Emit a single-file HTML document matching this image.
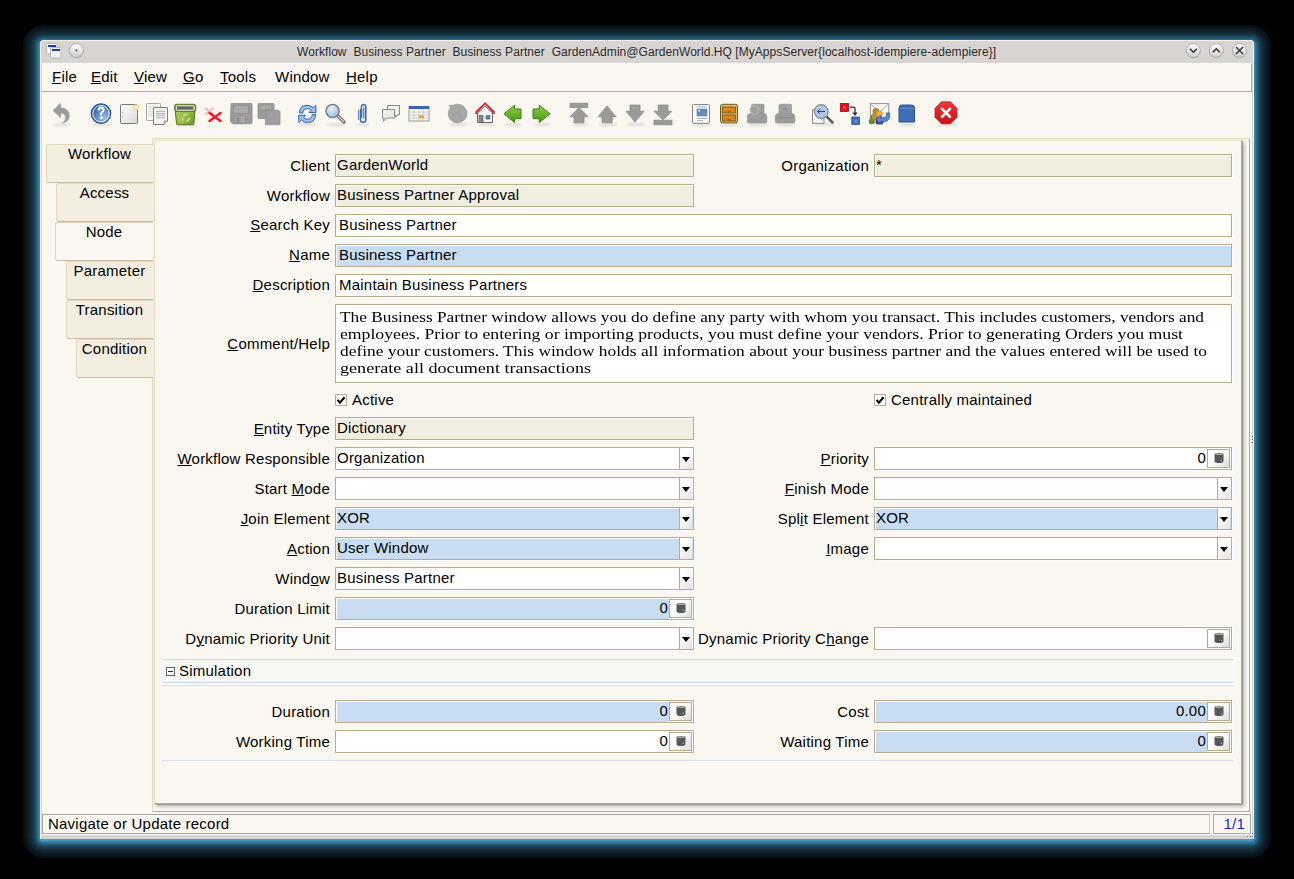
<!DOCTYPE html>
<html><head><meta charset="utf-8"><style>
html,body{margin:0;padding:0;}
body{width:1294px;height:879px;background:#000;position:relative;overflow:hidden;font-family:'Liberation Sans', sans-serif;}
.t{position:absolute;white-space:pre;line-height:0;height:0;letter-spacing:0.22px;}
.serif{letter-spacing:0;}
.t span{display:inline-block;line-height:0;}
.r{text-align:right;}
u{text-decoration:underline;text-underline-offset:1px;text-decoration-thickness:1px;}
.fld{position:absolute;box-sizing:border-box;border:1px solid #b8aa8c;box-shadow:1px 1px 0 #fff;}
.fld::before{content:"";position:absolute;left:0;top:0;right:0;bottom:0;border-left:1px solid #fff;border-top:1px solid #fff;}
</style></head><body>

<div style="position:absolute;left:23px;top:25px;width:1248px;height:833px;border-radius:20px;background:rgb(6, 16, 20);"></div>
<div style="position:absolute;left:24px;top:26px;width:1246px;height:831px;border-radius:19px;background:rgb(7, 18, 23);"></div>
<div style="position:absolute;left:25px;top:27px;width:1244px;height:829px;border-radius:18px;background:rgb(8, 21, 27);"></div>
<div style="position:absolute;left:26px;top:28px;width:1242px;height:827px;border-radius:17px;background:rgb(10, 24, 30);"></div>
<div style="position:absolute;left:27px;top:29px;width:1240px;height:825px;border-radius:16px;background:rgb(11, 27, 35);"></div>
<div style="position:absolute;left:28px;top:30px;width:1238px;height:823px;border-radius:15px;background:rgb(13, 31, 40);"></div>
<div style="position:absolute;left:29px;top:31px;width:1236px;height:821px;border-radius:14px;background:rgb(15, 35, 46);"></div>
<div style="position:absolute;left:30px;top:32px;width:1234px;height:819px;border-radius:13px;background:rgb(17, 40, 52);"></div>
<div style="position:absolute;left:31px;top:33px;width:1232px;height:817px;border-radius:12px;background:rgb(19, 46, 60);"></div>
<div style="position:absolute;left:32px;top:34px;width:1230px;height:815px;border-radius:11px;background:rgb(22, 53, 68);"></div>
<div style="position:absolute;left:33px;top:35px;width:1228px;height:813px;border-radius:10px;background:rgb(26, 61, 78);"></div>
<div style="position:absolute;left:34px;top:36px;width:1226px;height:811px;border-radius:9px;background:rgb(29, 69, 89);"></div>
<div style="position:absolute;left:35px;top:37px;width:1224px;height:809px;border-radius:8px;background:rgb(34, 79, 102);"></div>
<div style="position:absolute;left:36px;top:38px;width:1222px;height:807px;border-radius:7px;background:rgb(38, 91, 117);"></div>
<div style="position:absolute;left:37px;top:39px;width:1220px;height:805px;border-radius:6px;background:rgb(44, 104, 134);"></div>
<div style="position:absolute;left:38px;top:40px;width:1218px;height:803px;border-radius:5px;background:rgb(50, 119, 153);"></div>
<div style="position:absolute;left:39px;top:41px;width:1216px;height:801px;border-radius:4px;background:rgb(58, 136, 175);"></div>
<div style="position:absolute;left:40px;top:42px;width:1214px;height:799px;border-radius:3px;background:rgb(64, 152, 196);"></div>
<div style="position:absolute;left:41px;top:43px;width:1212px;height:797px;border-radius:3px;background:rgb(64, 152, 196);"></div>
<div style="position:absolute;left:40px;top:40px;width:1214px;height:799px;border-radius:4px 4px 3px 3px;background:#d7d4d1;"></div>
<div style="position:absolute;left:40px;top:40px;width:1214px;height:799px;box-sizing:border-box;border:1px solid #f4f0ee;border-bottom:none;border-radius:4px 4px 0 0;"></div>
<div style="position:absolute;left:42px;top:63px;width:1210px;height:772px;background:#faf7f0;"></div>
<div class="t" style="left:297px;top:51.84px;font-size:12px;font-family:'Liberation Sans', sans-serif;color:#2a2a2a;letter-spacing:0.06px;"><span>Workflow  Business Partner  Business Partner  GardenAdmin@GardenWorld.HQ [MyAppsServer{localhost-idempiere-adempiere}]</span></div>
<svg style="position:absolute;left:0;top:0" width="1294" height="140" viewBox="0 0 1294 140"><defs><linearGradient id="gBlue" x1="0" y1="0" x2="1" y2="1"><stop offset="0" stop-color="#2f5fa8"/><stop offset="1" stop-color="#8db3dd"/></linearGradient><radialGradient id="gHelp" cx="0.65" cy="0.7" r="0.7"><stop offset="0" stop-color="#9cc0e6"/><stop offset="1" stop-color="#2b5aa3"/></radialGradient><linearGradient id="gPaper" x1="0" y1="0" x2="1" y2="1"><stop offset="0" stop-color="#ffffff"/><stop offset="1" stop-color="#d8d8d8"/></linearGradient><linearGradient id="gGreen" x1="0" y1="0" x2="1" y2="0.4"><stop offset="0" stop-color="#a9cc55"/><stop offset="0.6" stop-color="#98bf48"/><stop offset="1" stop-color="#7aa232"/></linearGradient><linearGradient id="gArrow" x1="0" y1="0" x2="0" y2="1"><stop offset="0" stop-color="#8fd050"/><stop offset="1" stop-color="#3f9a10"/></linearGradient><linearGradient id="gBtn" x1="0" y1="0" x2="0" y2="1"><stop offset="0" stop-color="#fdfdfd"/><stop offset="1" stop-color="#cfcccb"/></linearGradient><radialGradient id="gLens" cx="0.4" cy="0.35" r="0.7"><stop offset="0" stop-color="#e8f2fc"/><stop offset="1" stop-color="#8fb5e0"/></radialGradient><linearGradient id="gRed" x1="0" y1="0" x2="0" y2="1"><stop offset="0" stop-color="#ee3a3a"/><stop offset="1" stop-color="#c8101a"/></linearGradient><filter id="sh" x="-20%" y="-20%" width="140%" height="160%"><feGaussianBlur stdDeviation="1"/></filter></defs><rect x="46.5" y="43.5" width="10.5" height="10.5" rx="1" fill="#fafafa" stroke="#b9bcb4"/><rect x="48" y="45" width="8" height="2" fill="#1b418c"/><rect x="50.5" y="47.5" width="10.5" height="10.5" rx="1" fill="#f2f2f2" stroke="#b9bcb4"/><rect x="52" y="49" width="8" height="2" fill="#1b418c"/><circle cx="76.4" cy="51.2" r="7.2" fill="#b9b6b3" opacity="0.6"/><circle cx="76.4" cy="50.5" r="7" fill="url(#gBtn)" stroke="#a3a09e" stroke-width="0.8"/><circle cx="76.4" cy="50.4" r="0.9" fill="#333"/><circle cx="1193.4" cy="51.2" r="7.2" fill="#b9b6b3" opacity="0.6"/><circle cx="1193.4" cy="50.5" r="7" fill="url(#gBtn)" stroke="#a3a09e" stroke-width="0.8"/><path d="M1189.9 48.8 L1193.4 52.2 L1196.9 48.8" fill="none" stroke="#303030" stroke-width="1.5"/><circle cx="1216.3" cy="51.2" r="7.2" fill="#b9b6b3" opacity="0.6"/><circle cx="1216.3" cy="50.5" r="7" fill="url(#gBtn)" stroke="#a3a09e" stroke-width="0.8"/><path d="M1212.8 52.2 L1216.3 48.8 L1219.8 52.2" fill="none" stroke="#303030" stroke-width="1.5"/><circle cx="1239.5" cy="51.2" r="7.2" fill="#b9b6b3" opacity="0.6"/><circle cx="1239.5" cy="50.5" r="7" fill="url(#gBtn)" stroke="#a3a09e" stroke-width="0.8"/><path d="M1236.0 47 L1243.0 54 M1243.0 47 L1236.0 54" fill="none" stroke="#303030" stroke-width="1.4"/><ellipse cx="62.0" cy="124.5" rx="9.0" ry="1.6" fill="#000" opacity="0.10" filter="url(#sh)"/><ellipse cx="102.0" cy="124.5" rx="10.0" ry="1.6" fill="#000" opacity="0.10" filter="url(#sh)"/><ellipse cx="186.0" cy="124.5" rx="11.0" ry="1.6" fill="#000" opacity="0.10" filter="url(#sh)"/><ellipse cx="308.5" cy="124.5" rx="9.5" ry="1.6" fill="#000" opacity="0.10" filter="url(#sh)"/><ellipse cx="336.0" cy="124.5" rx="10.0" ry="1.6" fill="#000" opacity="0.10" filter="url(#sh)"/><ellipse cx="363.5" cy="124.5" rx="5.5" ry="1.6" fill="#000" opacity="0.10" filter="url(#sh)"/><ellipse cx="458.5" cy="124.5" rx="9.5" ry="1.6" fill="#000" opacity="0.10" filter="url(#sh)"/><ellipse cx="486.0" cy="124.5" rx="9.0" ry="1.6" fill="#000" opacity="0.10" filter="url(#sh)"/><ellipse cx="513.5" cy="124.5" rx="8.5" ry="1.6" fill="#000" opacity="0.10" filter="url(#sh)"/><ellipse cx="542.5" cy="124.5" rx="8.5" ry="1.6" fill="#000" opacity="0.10" filter="url(#sh)"/><ellipse cx="580.0" cy="124.5" rx="9.0" ry="1.6" fill="#000" opacity="0.10" filter="url(#sh)"/><ellipse cx="608.0" cy="124.5" rx="9.0" ry="1.6" fill="#000" opacity="0.10" filter="url(#sh)"/><ellipse cx="636.0" cy="124.5" rx="9.0" ry="1.6" fill="#000" opacity="0.10" filter="url(#sh)"/><ellipse cx="702.0" cy="124.5" rx="9.0" ry="1.6" fill="#000" opacity="0.10" filter="url(#sh)"/><ellipse cx="730.0" cy="124.5" rx="9.0" ry="1.6" fill="#000" opacity="0.10" filter="url(#sh)"/><ellipse cx="758.0" cy="124.5" rx="10.0" ry="1.6" fill="#000" opacity="0.10" filter="url(#sh)"/><ellipse cx="786.0" cy="124.5" rx="10.0" ry="1.6" fill="#000" opacity="0.10" filter="url(#sh)"/><ellipse cx="823.5" cy="124.5" rx="10.5" ry="1.6" fill="#000" opacity="0.10" filter="url(#sh)"/><ellipse cx="908.0" cy="124.5" rx="8.0" ry="1.6" fill="#000" opacity="0.10" filter="url(#sh)"/><ellipse cx="947.0" cy="124.5" rx="11.0" ry="1.6" fill="#000" opacity="0.10" filter="url(#sh)"/><path d="M53 110.5 L60.5 103.5 L60.5 107.8 Q69.5 108.5 69.3 116.5 Q69 121.5 62.5 123 Q66 120.5 65.5 116.5 Q65 113 60.5 113 L60.5 117.5 Z" fill="#9c9c9c" stroke="#8e8e8e" stroke-width="0.6"/><circle cx="101" cy="113.6" r="9.8" fill="url(#gHelp)" stroke="#234f94" stroke-width="1.1"/><circle cx="101" cy="113.6" r="8.2" fill="none" stroke="#ffffff" stroke-width="0.9"/><path d="M97.6 110.3 Q97.8 106.6 101.3 106.6 Q104.8 106.8 104.7 109.8 Q104.6 111.8 102.6 112.8 Q101.6 113.4 101.6 115.3 L100 115.3 Q99.9 112.6 101.4 111.6 Q102.4 110.9 102.3 109.9 Q102.2 108.7 101.2 108.7 Q100 108.8 99.9 110.5 Z" fill="#fff"/><rect x="99.9" y="116.6" width="2.6" height="2.5" fill="#fff"/><rect x="120.5" y="104.5" width="17" height="19" rx="1" fill="url(#gPaper)" stroke="#7a7a7a"/><circle cx="122.5" cy="112.2" r="0.5" fill="#888"/><circle cx="122.5" cy="116.5" r="0.5" fill="#888"/><circle cx="136" cy="107.2" r="2.3" fill="#fffbe0" stroke="#f0e050" stroke-width="1.2"/><rect x="146.5" y="103.5" width="14" height="17" rx="0.8" fill="#f6f6f6" stroke="#a9a9a9"/><line x1="148.5" y1="107" x2="158" y2="107" stroke="#d0d0d0" stroke-width="0.7"/><line x1="148.5" y1="109.2" x2="158" y2="109.2" stroke="#d0d0d0" stroke-width="0.7"/><line x1="148.5" y1="111.4" x2="158" y2="111.4" stroke="#d0d0d0" stroke-width="0.7"/><line x1="148.5" y1="113.6" x2="158" y2="113.6" stroke="#d0d0d0" stroke-width="0.7"/><line x1="148.5" y1="115.8" x2="158" y2="115.8" stroke="#d0d0d0" stroke-width="0.7"/><path d="M153.5 107.5 L167.5 107.5 L167.5 121 L164 124.5 L153.5 124.5 Z" fill="#f3f3f3" stroke="#808080"/><path d="M167.5 121 L164 121 L164 124.5" fill="#d0d0d0" stroke="#808080" stroke-width="0.8"/><line x1="156" y1="111.3" x2="165" y2="111.3" stroke="#9a9a9a" stroke-width="0.8"/><line x1="156" y1="113.5" x2="165" y2="113.5" stroke="#9a9a9a" stroke-width="0.8"/><line x1="156" y1="115.7" x2="165" y2="115.7" stroke="#9a9a9a" stroke-width="0.8"/><line x1="156" y1="117.9" x2="165" y2="117.9" stroke="#9a9a9a" stroke-width="0.8"/><path d="M175.3 111 L195 111 L193.8 124 Q193.6 124.7 192.9 124.7 L177.4 124.7 Q176.7 124.7 176.6 124 Z" fill="url(#gGreen)" stroke="#56761a" stroke-width="1"/><path d="M174.6 106.3 Q174.6 104.3 176.6 104.3 L193.8 104.3 Q195.8 104.3 195.8 106.3 L195.8 109.3 Q195.8 111.2 193.8 111.2 L176.6 111.2 Q174.6 111.2 174.6 109.3 Z" fill="#7ea232" stroke="#56761a" stroke-width="1"/><rect x="176.4" y="105.8" width="17.6" height="4.4" rx="0.8" fill="#606260" stroke="#f4f4f4" stroke-width="1"/><path d="M183.5 116 Q185 113.7 187.6 114.5 M189.2 117.8 Q189.3 120.6 186.6 121 M183.3 120.3 Q182 118.8 182.7 117.3" fill="none" stroke="#e2f0c0" stroke-width="1.1"/><path d="M205 108 L213.5 114.5 M213.5 108 L205 114.5" stroke="#ffb0b8" stroke-width="1.8"/><path d="M209.5 113 L220.5 121 M220.5 113 L209.5 121" stroke="#ff1224" stroke-width="2.4" stroke-linecap="round"/><path d="M231 104.5 Q230.5 103.5 231.5 103.5 L251 103.5 Q252 103.5 252 104.5 L252 123 Q252 123.8 251 123.8 L232.5 123.8 L230.5 121.8 Z" fill="#9b9b9b" stroke="#8d8d8d" stroke-width="0.8"/><rect x="233.5" y="105.5" width="15" height="8" fill="#a9a9a9" stroke="#8f8f8f" stroke-width="0.7"/><rect x="235" y="115.5" width="10.5" height="8" fill="#a5a5a5" stroke="#8f8f8f" stroke-width="0.7"/><rect x="237" y="117" width="2.2" height="5.5" fill="#8a8a8a"/><rect x="258" y="103.5" width="16" height="15" rx="0.8" fill="#9b9b9b" stroke="#8d8d8d" stroke-width="0.8"/><rect x="260" y="105" width="12" height="5" fill="#a9a9a9" stroke="#8f8f8f" stroke-width="0.6"/><path d="M265.5 110.2 L278.5 110.2 L280 111.8 L280 124.7 L265.5 124.7 Z" fill="#9e9e9e" stroke="#8d8d8d" stroke-width="0.8"/><path d="M299.5 113 Q299.5 105.3 307.3 105.3 Q311.3 105.3 313.3 108 L315.8 105.5 L316 112.5 L309 112.5 L311.2 110.3 Q309.8 108.6 307.3 108.6 Q303 108.8 302.8 113 Z" fill="#9fc0e8" stroke="#3366b0" stroke-width="1"/><path d="M315.5 114.5 Q315.5 122.6 307.5 122.6 Q303.5 122.6 301.5 119.8 L299 122.5 L298.5 115.3 L305.8 115.3 L303.6 117.6 Q305 119.3 307.5 119.3 Q312 119.1 312.2 114.5 Z" fill="#9fc0e8" stroke="#3366b0" stroke-width="1"/><path d="M337.5 115.5 L344 122" stroke="#6a6a6a" stroke-width="3.2" stroke-linecap="round"/><path d="M337.8 115.8 L343.7 121.7" stroke="#e8e8e8" stroke-width="1.2" stroke-linecap="round"/><circle cx="332.6" cy="111" r="6.6" fill="url(#gLens)" stroke="#7b7b7b" stroke-width="1.4"/><path d="M360.5 109 L360.5 119.5 Q360.5 122.3 363 122.3 Q365.8 122.3 365.8 119.5 L365.8 106.8 Q365.8 104.5 363.6 104.5 Q361.5 104.5 361.5 106.8 L361.5 118" fill="none" stroke="#3f6fb4" stroke-width="1.6"/><path d="M363.8 107.5 L363.8 118.5" fill="none" stroke="#3f6fb4" stroke-width="1.2"/><path d="M358.5 110 L358.5 120" stroke="#6a90c8" stroke-width="1.2"/><path d="M387.5 105.5 L399.5 105.5 L399.5 114.5 L397.5 114.5 L396 117 L395 114.5 L387.5 114.5 Z" fill="#f2f2f2" stroke="#7d7d7d" stroke-width="0.9"/><path d="M382.5 109.5 L394.5 109.5 L394.5 118 L386.5 118 L383.5 121.3 L384 118 L382.5 118 Z" fill="#ececec" stroke="#7d7d7d" stroke-width="0.9"/><rect x="409" y="106.5" width="20" height="14.5" fill="#f6f6f2" stroke="#8e8e8e" stroke-width="0.9"/><rect x="409" y="106" width="20" height="3" fill="#3a66b0"/><line x1="409.5" y1="112" x2="428.5" y2="112" stroke="#c8c8c8" stroke-width="0.8"/><line x1="409.5" y1="115" x2="428.5" y2="115" stroke="#c8c8c8" stroke-width="0.8"/><line x1="409.5" y1="118" x2="428.5" y2="118" stroke="#c8c8c8" stroke-width="0.8"/><line x1="413.8" y1="109" x2="413.8" y2="120.5" stroke="#c8c8c8" stroke-width="0.8"/><line x1="418.6" y1="109" x2="418.6" y2="120.5" stroke="#c8c8c8" stroke-width="0.8"/><line x1="423.4" y1="109" x2="423.4" y2="120.5" stroke="#c8c8c8" stroke-width="0.8"/><rect x="419" y="115.5" width="4.8" height="2.8" rx="1" fill="#f09a20"/><circle cx="457.6" cy="113.5" r="9.3" fill="#a6a6a6" stroke="#9a9a9a" stroke-width="0.8"/><path d="M453 116.5 L457.3 112.3 L461.6 116.5" fill="none" stroke="#959595" stroke-width="0.8"/><path d="M448 105.5 L452.5 104.8 L451.5 108.5 Z" fill="#a0a0a0"/><path d="M477.5 113 L477.5 122.5 L492.5 122.5 L492.5 113 L485 106 Z" fill="#f4f4f4" stroke="#555" stroke-width="0.9"/><path d="M475.8 114 L485.1 104 L494.3 114 L494.3 111.5 L485.1 102.6 L475.8 111.5 Z" fill="#e8242c" stroke="#c01018" stroke-width="0.7"/><rect x="479" y="115.5" width="4" height="7" fill="#8a8a84" stroke="#555" stroke-width="0.6"/><rect x="486" y="115.5" width="4" height="3.6" fill="#5080c0" stroke="#555" stroke-width="0.5"/><path d="M504 113.8 L514.5 105.3 L514.5 109 L521 109 L521 118.7 L514.5 118.7 L514.5 122.5 Z" fill="url(#gArrow)" stroke="#3a8010" stroke-width="1"/><path d="M550 113.8 L539.3 105.3 L539.3 109 L533 109 L533 118.7 L539.3 118.7 L539.3 122.5 Z" fill="url(#gArrow)" stroke="#3a8010" stroke-width="1"/><rect x="570" y="103.2" width="17.8" height="4.4" fill="#9a9a9a" stroke="#8c8c8c" stroke-width="0.8"/><path d="M579 107.6 L570 116.8 L574 116.8 L574 122.8 L584 122.8 L584 116.8 L588 116.8 Z" fill="#9a9a9a" stroke="#8c8c8c" stroke-width="0.8"/><path d="M607 106 L598 116.8 L602 116.8 L602 122.8 L612.2 122.8 L612.2 116.8 L616 116.8 Z" fill="#9a9a9a" stroke="#8c8c8c" stroke-width="0.8"/><path d="M630 105 L640 105 L640 111.3 L644 111.3 L635 122 L626 111.3 L630 111.3 Z" fill="#9a9a9a" stroke="#8c8c8c" stroke-width="0.8"/><path d="M658.2 105 L668 105 L668 111.3 L672 111.3 L663 119.8 L654 111.3 L658.2 111.3 Z" fill="#9a9a9a" stroke="#8c8c8c" stroke-width="0.8"/><rect x="654" y="120.2" width="18" height="4.6" fill="#9a9a9a" stroke="#8c8c8c" stroke-width="0.8"/><rect x="692.5" y="104.5" width="17" height="18.8" rx="1" fill="#fbfbfb" stroke="#777" stroke-width="0.9"/><rect x="697" y="109" width="10" height="7" fill="#5a90d0" stroke="#3c70b8" stroke-width="0.5"/><circle cx="699.3" cy="110.8" r="1" fill="#f8f0a0"/><path d="M697 116 L701 112.8 L704 114.5 L707 112 L707 116 Z" fill="#7a8aa0"/><line x1="697" y1="106.8" x2="707" y2="106.8" stroke="#9a9a9a" stroke-width="0.8"/><line x1="697" y1="118.5" x2="707" y2="118.5" stroke="#9a9a9a" stroke-width="0.8"/><line x1="697" y1="120.8" x2="703" y2="120.8" stroke="#9a9a9a" stroke-width="0.8"/><rect x="720.5" y="104.3" width="17" height="18.5" rx="2" fill="#e6b870" stroke="#6a5a1a" stroke-width="1"/><rect x="722.5" y="107" width="13" height="6" fill="#d8861a" stroke="#6a5a1a" stroke-width="0.8"/><rect x="722.5" y="115" width="13" height="6" fill="#d8861a" stroke="#6a5a1a" stroke-width="0.8"/><rect x="727.5" y="111.3" width="3" height="1.2" fill="#6a5a1a"/><rect x="727.5" y="119.3" width="3" height="1.2" fill="#6a5a1a"/><rect x="751.5" y="104.3" width="12.5" height="10" rx="0.8" fill="#a0a0a0" stroke="#949494" stroke-width="0.7"/><path d="M747.3 117 Q747.3 113.5 750.5 113.5 L763.5 113.5 Q766.8 113.5 766.8 117 L766.8 121.5 Q766.8 122.9 765.5 122.9 L748.6 122.9 Q747.3 122.9 747.3 121.5 Z" fill="#9c9c9c" stroke="#929292" stroke-width="0.7"/><circle cx="754.5" cy="110" r="4.2" fill="none" stroke="#b0b0b0" stroke-width="1.2"/><rect x="779" y="104.3" width="12.5" height="10" rx="0.8" fill="#a0a0a0" stroke="#949494" stroke-width="0.7"/><path d="M775.3 117 Q775.3 113.5 778.5 113.5 L791.5 113.5 Q794.8 113.5 794.8 117 L794.8 121.5 Q794.8 122.9 793.5 122.9 L776.6 122.9 Q775.3 122.9 775.3 121.5 Z" fill="#9c9c9c" stroke="#929292" stroke-width="0.7"/><path d="M783 110 L785.3 107 L787.6 110 Z" fill="#8a8a8a"/><line x1="776" y1="117.5" x2="794" y2="117.5" stroke="#8a8a8a" stroke-width="0.7"/><rect x="812.5" y="109.8" width="11.5" height="13.5" fill="#f4f4f4" stroke="#808080" stroke-width="0.9"/><path d="M826.5 116.5 L832.5 122.5" stroke="#5e5e5e" stroke-width="2.6" stroke-linecap="round"/><circle cx="821.2" cy="111.5" r="6.8" fill="#a8c4e4" fill-opacity="0.9" stroke="#8a8a8a" stroke-width="1.2"/><path d="M817.5 111.5 L825 111.5 M817.5 111.5 L819.8 109.3 M817.5 111.5 L819.8 113.7" stroke="#2a4a80" stroke-width="1"/><rect x="840.5" y="103.5" width="8" height="8" fill="#e01018" stroke="#a00810" stroke-width="0.8"/><rect x="843" y="106" width="3" height="3" fill="#ff4040"/><path d="M849.5 107.2 L853.6 107.2 Q855 107.2 855 108.8 L855 113.5" fill="none" stroke="#303030" stroke-width="1.3"/><path d="M852.4 112.5 L855 116 L857.6 112.5 Z" fill="#303030"/><rect x="851.8" y="117" width="7.8" height="7.5" fill="#3f70b8" stroke="#2a5090" stroke-width="0.8"/><rect x="854.5" y="119.8" width="2.5" height="2.5" fill="#6a98d8"/><rect x="870.3" y="103.7" width="18.5" height="13.5" fill="#fafafa" stroke="#7a7a7a" stroke-width="0.8"/><path d="M870.5 104 L879.5 112 L888.6 104" fill="none" stroke="#9a9a9a" stroke-width="0.8"/><circle cx="873" cy="117.5" r="2.8" fill="#6a8a30"/><rect x="868.8" y="119" width="6" height="5" rx="1.5" fill="#6a8a30"/><circle cx="876" cy="111.5" r="3.2" fill="#b88a30" stroke="#8a6a20" stroke-width="0.5"/><rect x="872" y="113.5" width="7" height="6" rx="2" fill="#b8903a"/><circle cx="879.5" cy="114" r="3.2" fill="#f0b040" stroke="#c88820" stroke-width="0.5"/><rect x="875.5" y="117.5" width="8" height="7" rx="2" fill="#5a3a8a"/><path d="M889.5 115.5 Q889.5 121.5 884 121.5 L880.5 121.5 L880.5 124 L876.5 119.5 L880.5 115 L880.5 118 L884 118 Q886.3 118 886.3 115.5 L886.3 113 L889.5 113 Z" fill="#5a8ad0" stroke="#2a5aa0" stroke-width="0.8"/><path d="M899 108 Q899 105 902 105 L911.5 105 Q914.5 105 914.5 108 L914.5 122 L899 122 Z" fill="#3e6fb6" stroke="#2b528e" stroke-width="1"/><line x1="900" y1="108.3" x2="913.5" y2="108.3" stroke="#6a94d0" stroke-width="0.8"/><path d="M941.5 101.8 L950.5 101.8 L957 108.3 L957 117.3 L950.5 123.8 L941.5 123.8 L935 117.3 L935 108.3 Z" fill="url(#gRed)" stroke="#b01018" stroke-width="0.7"/><path d="M942 108.8 L950 116.8 M950 108.8 L942 116.8" stroke="#fff" stroke-width="2.6" stroke-linecap="round"/></svg>
<div style="position:absolute;left:42px;top:63px;width:1210px;height:29px;box-sizing:border-box;border-top:1px solid #fff;border-bottom:1px solid #b8aa8c;border-right:1px solid #b8aa8c;"></div>
<div class="t" style="left:52px;top:76.80px;font-size:15px;font-family:'Liberation Sans', sans-serif;color:#000;"><span><u>F</u>ile</span></div>
<div class="t" style="left:91px;top:76.80px;font-size:15px;font-family:'Liberation Sans', sans-serif;color:#000;"><span><u>E</u>dit</span></div>
<div class="t" style="left:134px;top:76.80px;font-size:15px;font-family:'Liberation Sans', sans-serif;color:#000;"><span><u>V</u>iew</span></div>
<div class="t" style="left:183px;top:76.80px;font-size:15px;font-family:'Liberation Sans', sans-serif;color:#000;"><span><u>G</u>o</span></div>
<div class="t" style="left:220px;top:76.80px;font-size:15px;font-family:'Liberation Sans', sans-serif;color:#000;"><span><u>T</u>ools</span></div>
<div class="t" style="left:275px;top:76.80px;font-size:15px;font-family:'Liberation Sans', sans-serif;color:#000;"><span>Window</span></div>
<div class="t" style="left:346px;top:76.80px;font-size:15px;font-family:'Liberation Sans', sans-serif;color:#000;"><span><u>H</u>elp</span></div>
<div style="position:absolute;left:152px;top:138px;width:1098px;height:674px;box-sizing:border-box;border:1px solid #e6dcc4;border-bottom-color:#b8aa8c;border-right-color:#b8aa8c;"></div>
<div style="position:absolute;left:154px;top:140px;width:1088px;height:664px;box-sizing:border-box;border:1px solid #e6dcc4;border-bottom-color:#b8aa8c;border-right-color:#b8aa8c;box-shadow:1px 1px 0 rgba(0,0,0,0.18),2px 2px 4px rgba(0,0,0,0.32);background:#faf7f0;"></div>
<div style="position:absolute;left:46px;top:144px;width:107px;height:39px;box-sizing:border-box;background:#f3eee0;border:1px solid #e2d6bc;border-right:none;border-bottom-color:#cbbd9c;border-radius:3px 0 0 3px;"></div>
<div class="t" style="left:46px;width:107px;text-align:center;top:153.80px;font-size:15px;"><span>Workflow</span></div>
<div style="position:absolute;left:56px;top:183px;width:97px;height:39px;box-sizing:border-box;background:#f3eee0;border:1px solid #e2d6bc;border-right:none;border-bottom-color:#cbbd9c;border-radius:3px 0 0 3px;"></div>
<div class="t" style="left:56px;width:97px;text-align:center;top:192.80px;font-size:15px;"><span>Access</span></div>
<div style="position:absolute;left:55px;top:222px;width:98px;height:39px;box-sizing:border-box;background:#faf7f0;border:1px solid #e2d6bc;border-right:none;border-bottom-color:#cbbd9c;border-radius:3px 0 0 3px;"></div>
<div class="t" style="left:55px;width:98px;text-align:center;top:231.80px;font-size:15px;"><span>Node</span></div>
<div style="position:absolute;left:66px;top:261px;width:87px;height:39px;box-sizing:border-box;background:#f3eee0;border:1px solid #e2d6bc;border-right:none;border-bottom-color:#cbbd9c;border-radius:3px 0 0 3px;"></div>
<div class="t" style="left:66px;width:87px;text-align:center;top:270.80px;font-size:15px;"><span>Parameter</span></div>
<div style="position:absolute;left:66px;top:300px;width:87px;height:39px;box-sizing:border-box;background:#f3eee0;border:1px solid #e2d6bc;border-right:none;border-bottom-color:#cbbd9c;border-radius:3px 0 0 3px;"></div>
<div class="t" style="left:66px;width:87px;text-align:center;top:309.80px;font-size:15px;"><span>Transition</span></div>
<div style="position:absolute;left:76px;top:339px;width:77px;height:39px;box-sizing:border-box;background:#f3eee0;border:1px solid #e2d6bc;border-right:none;border-bottom-color:#cbbd9c;border-radius:3px 0 0 3px;"></div>
<div class="t" style="left:76px;width:77px;text-align:center;top:348.80px;font-size:15px;"><span>Condition</span></div>
<div class="t r" style="right:964px;top:165.80px;font-size:15px;"><span>Client</span></div>
<div class="fld" style="left:335px;top:154px;width:359px;height:23px;background:#f0eedf;"></div>
<div class="t" style="left:337px;top:164.80px;font-size:15px;font-family:'Liberation Sans', sans-serif;color:#000;"><span>GardenWorld</span></div>
<div class="t r" style="right:425px;top:165.80px;font-size:15px;"><span>Organization</span></div>
<div class="fld" style="left:874px;top:154px;width:358px;height:23px;background:#f0eedf;"></div>
<div class="t" style="left:876px;top:164.80px;font-size:15px;font-family:'Liberation Sans', sans-serif;color:#000;"><span>*</span></div>
<div class="t r" style="right:964px;top:195.80px;font-size:15px;"><span>Workflow</span></div>
<div class="fld" style="left:335px;top:184px;width:359px;height:23px;background:#f0eedf;"></div>
<div class="t" style="left:337px;top:194.80px;font-size:15px;font-family:'Liberation Sans', sans-serif;color:#000;"><span>Business Partner Approval</span></div>
<div class="t r" style="right:964px;top:224.80px;font-size:15px;"><span><u>S</u>earch Key</span></div>
<div class="fld" style="left:335px;top:214px;width:897px;height:23px;background:#fff;"></div>
<div class="t" style="left:339px;top:224.80px;font-size:15px;font-family:'Liberation Sans', sans-serif;color:#000;"><span>Business Partner</span></div>
<div class="t r" style="right:964px;top:254.80px;font-size:15px;"><span><u>N</u>ame</span></div>
<div class="fld" style="left:335px;top:244px;width:897px;height:23px;background:#c8ddf2;"></div>
<div class="t" style="left:339px;top:254.80px;font-size:15px;font-family:'Liberation Sans', sans-serif;color:#000;"><span>Business Partner</span></div>
<div class="t r" style="right:964px;top:284.80px;font-size:15px;"><span><u>D</u>escription</span></div>
<div class="fld" style="left:335px;top:274px;width:897px;height:23px;background:#fff;"></div>
<div class="t" style="left:339px;top:284.80px;font-size:15px;font-family:'Liberation Sans', sans-serif;color:#000;"><span>Maintain Business Partners</span></div>
<div class="t r" style="right:964px;top:343.80px;font-size:15px;"><span><u>C</u>omment/Help</span></div>
<div class="fld" style="left:335px;top:304px;width:897px;height:79px;background:#fff;"></div>
<div class="t serif" data-w="863" style="left:340px;top:316.80px;font-size:15px;font-family:'Liberation Serif', serif;transform:scaleX(1.1526);transform-origin:0 0;"><span>The Business Partner window allows you do define any party with whom you transact. This includes customers, vendors and</span></div>
<div class="t serif" data-w="842" style="left:340px;top:333.80px;font-size:15px;font-family:'Liberation Serif', serif;transform:scaleX(1.1792);transform-origin:0 0;"><span>employees. Prior to entering or importing products, you must define your vendors. Prior to generating Orders you must</span></div>
<div class="t serif" data-w="866" style="left:340px;top:350.80px;font-size:15px;font-family:'Liberation Serif', serif;transform:scaleX(1.1605);transform-origin:0 0;"><span>define your customers. This window holds all information about your business partner and the values entered will be used to</span></div>
<div class="t serif" data-w="250" style="left:340px;top:367.80px;font-size:15px;font-family:'Liberation Serif', serif;transform:scaleX(1.2077);transform-origin:0 0;"><span>generate all document transactions</span></div>
<div style="position:absolute;left:335px;top:394px;width:12px;height:12px;box-sizing:border-box;border:1px solid #b8aa8c;background:#fff;"></div>
<svg style="position:absolute;left:335px;top:394px" width="12" height="12" viewBox="0 0 12 12"><path d="M2.6 5.8 L4.9 8.6 L9.6 3.2" fill="none" stroke="#000" stroke-width="2.1"/></svg>
<div class="t" style="left:352px;top:399.80px;font-size:15px;font-family:'Liberation Sans', sans-serif;color:#000;"><span>Active</span></div>
<div style="position:absolute;left:874px;top:394px;width:12px;height:12px;box-sizing:border-box;border:1px solid #b8aa8c;background:#fff;"></div>
<svg style="position:absolute;left:874px;top:394px" width="12" height="12" viewBox="0 0 12 12"><path d="M2.6 5.8 L4.9 8.6 L9.6 3.2" fill="none" stroke="#000" stroke-width="2.1"/></svg>
<div class="t" style="left:891px;top:399.80px;font-size:15px;font-family:'Liberation Sans', sans-serif;color:#000;"><span>Centrally maintained</span></div>
<div class="t r" style="right:964px;top:428.80px;font-size:15px;"><span><u>E</u>ntity Type</span></div>
<div class="fld" style="left:335px;top:417px;width:359px;height:23px;background:#f0eedf;"></div>
<div class="t" style="left:337px;top:427.80px;font-size:15px;font-family:'Liberation Sans', sans-serif;color:#000;"><span>Dictionary</span></div>
<div class="t r" style="right:964px;top:458.80px;font-size:15px;"><span><u>W</u>orkflow Responsible</span></div>
<div class="fld" style="left:335px;top:447px;width:359px;height:23px;background:#fff;"></div>
<div style="position:absolute;left:679px;top:448px;width:13px;height:21px;box-sizing:border-box;border-left:1px solid #b8aa8c;background:linear-gradient(135deg,#ffffff 30%,#e4e2de 100%);"></div>
<div style="position:absolute;left:682px;top:457px;width:0;height:0;border-left:4px solid transparent;border-right:4px solid transparent;border-top:5px solid #000;"></div>
<div class="t" style="left:337px;top:457.80px;font-size:15px;font-family:'Liberation Sans', sans-serif;color:#000;"><span>Organization</span></div>
<div class="t r" style="right:425px;top:458.80px;font-size:15px;"><span><u>P</u>riority</span></div>
<div class="fld" style="left:874px;top:447px;width:358px;height:23px;background:#fff;"></div>
<div style="position:absolute;left:1207px;top:448px;width:24px;height:21px;background:#fff"></div>
<div style="position:absolute;left:1207px;top:449px;width:23px;height:19px;box-sizing:border-box;border:1px solid #b8aa8c;background:linear-gradient(135deg,#ffffff 40%,#dedcd6 100%);"></div>
<svg style="position:absolute;left:1213px;top:452px" width="12" height="12" viewBox="0 0 12 12"><path d="M1.5 2.5 Q1.5 1 6 1 Q10.5 1 10.5 2.5 L10.5 9 Q10.5 11 6 11 Q1.5 11 1.5 9 Z" fill="#55585a"/><rect x="2.5" y="1.6" width="7" height="1.4" rx="0.7" fill="#a9ae88"/><circle cx="8.3" cy="8.3" r="0.6" fill="#ccc"/></svg>
<div class="t r" style="right:88px;top:457.80px;font-size:15px;"><span>0</span></div>
<div class="t r" style="right:964px;top:488.80px;font-size:15px;"><span>Start <u>M</u>ode</span></div>
<div class="fld" style="left:335px;top:477px;width:359px;height:23px;background:#fff;"></div>
<div style="position:absolute;left:679px;top:478px;width:13px;height:21px;box-sizing:border-box;border-left:1px solid #b8aa8c;background:linear-gradient(135deg,#ffffff 30%,#e4e2de 100%);"></div>
<div style="position:absolute;left:682px;top:487px;width:0;height:0;border-left:4px solid transparent;border-right:4px solid transparent;border-top:5px solid #000;"></div>
<div class="t r" style="right:425px;top:488.80px;font-size:15px;"><span><u>F</u>inish Mode</span></div>
<div class="fld" style="left:874px;top:477px;width:358px;height:23px;background:#fff;"></div>
<div style="position:absolute;left:1217px;top:478px;width:13px;height:21px;box-sizing:border-box;border-left:1px solid #b8aa8c;background:linear-gradient(135deg,#ffffff 30%,#e4e2de 100%);"></div>
<div style="position:absolute;left:1220px;top:487px;width:0;height:0;border-left:4px solid transparent;border-right:4px solid transparent;border-top:5px solid #000;"></div>
<div class="t r" style="right:964px;top:518.80px;font-size:15px;"><span><u>J</u>oin Element</span></div>
<div class="fld" style="left:335px;top:507px;width:359px;height:23px;background:#c8ddf2;"></div>
<div style="position:absolute;left:679px;top:508px;width:13px;height:21px;box-sizing:border-box;border-left:1px solid #b8aa8c;background:linear-gradient(135deg,#ffffff 30%,#e4e2de 100%);"></div>
<div style="position:absolute;left:682px;top:517px;width:0;height:0;border-left:4px solid transparent;border-right:4px solid transparent;border-top:5px solid #000;"></div>
<div class="t" style="left:337px;top:517.80px;font-size:15px;font-family:'Liberation Sans', sans-serif;color:#000;"><span>XOR</span></div>
<div class="t r" style="right:425px;top:518.80px;font-size:15px;"><span>Spl<u>i</u>t Element</span></div>
<div class="fld" style="left:874px;top:507px;width:358px;height:23px;background:#c8ddf2;"></div>
<div style="position:absolute;left:1217px;top:508px;width:13px;height:21px;box-sizing:border-box;border-left:1px solid #b8aa8c;background:linear-gradient(135deg,#ffffff 30%,#e4e2de 100%);"></div>
<div style="position:absolute;left:1220px;top:517px;width:0;height:0;border-left:4px solid transparent;border-right:4px solid transparent;border-top:5px solid #000;"></div>
<div class="t" style="left:876px;top:517.80px;font-size:15px;font-family:'Liberation Sans', sans-serif;color:#000;"><span>XOR</span></div>
<div class="t r" style="right:964px;top:548.80px;font-size:15px;"><span><u>A</u>ction</span></div>
<div class="fld" style="left:335px;top:537px;width:359px;height:23px;background:#c8ddf2;"></div>
<div style="position:absolute;left:679px;top:538px;width:13px;height:21px;box-sizing:border-box;border-left:1px solid #b8aa8c;background:linear-gradient(135deg,#ffffff 30%,#e4e2de 100%);"></div>
<div style="position:absolute;left:682px;top:547px;width:0;height:0;border-left:4px solid transparent;border-right:4px solid transparent;border-top:5px solid #000;"></div>
<div class="t" style="left:337px;top:547.80px;font-size:15px;font-family:'Liberation Sans', sans-serif;color:#000;"><span>User Window</span></div>
<div class="t r" style="right:425px;top:548.80px;font-size:15px;"><span><u>I</u>mage</span></div>
<div class="fld" style="left:874px;top:537px;width:358px;height:23px;background:#fff;"></div>
<div style="position:absolute;left:1217px;top:538px;width:13px;height:21px;box-sizing:border-box;border-left:1px solid #b8aa8c;background:linear-gradient(135deg,#ffffff 30%,#e4e2de 100%);"></div>
<div style="position:absolute;left:1220px;top:547px;width:0;height:0;border-left:4px solid transparent;border-right:4px solid transparent;border-top:5px solid #000;"></div>
<div class="t r" style="right:964px;top:578.80px;font-size:15px;"><span>Wind<u>o</u>w</span></div>
<div class="fld" style="left:335px;top:567px;width:359px;height:23px;background:#fff;"></div>
<div style="position:absolute;left:679px;top:568px;width:13px;height:21px;box-sizing:border-box;border-left:1px solid #b8aa8c;background:linear-gradient(135deg,#ffffff 30%,#e4e2de 100%);"></div>
<div style="position:absolute;left:682px;top:577px;width:0;height:0;border-left:4px solid transparent;border-right:4px solid transparent;border-top:5px solid #000;"></div>
<div class="t" style="left:337px;top:577.80px;font-size:15px;font-family:'Liberation Sans', sans-serif;color:#000;"><span>Business Partner</span></div>
<div class="t r" style="right:964px;top:608.80px;font-size:15px;"><span>Duration Limit</span></div>
<div class="fld" style="left:335px;top:597px;width:359px;height:23px;background:#c8ddf2;"></div>
<div style="position:absolute;left:669px;top:598px;width:24px;height:21px;background:#fff"></div>
<div style="position:absolute;left:669px;top:599px;width:23px;height:19px;box-sizing:border-box;border:1px solid #b8aa8c;background:linear-gradient(135deg,#ffffff 40%,#dedcd6 100%);"></div>
<svg style="position:absolute;left:675px;top:602px" width="12" height="12" viewBox="0 0 12 12"><path d="M1.5 2.5 Q1.5 1 6 1 Q10.5 1 10.5 2.5 L10.5 9 Q10.5 11 6 11 Q1.5 11 1.5 9 Z" fill="#55585a"/><rect x="2.5" y="1.6" width="7" height="1.4" rx="0.7" fill="#a9ae88"/><circle cx="8.3" cy="8.3" r="0.6" fill="#ccc"/></svg>
<div class="t r" style="right:626px;top:607.80px;font-size:15px;"><span>0</span></div>
<div class="t r" style="right:964px;top:638.80px;font-size:15px;"><span>D<u>y</u>namic Priority Unit</span></div>
<div class="fld" style="left:335px;top:627px;width:359px;height:23px;background:#fff;"></div>
<div style="position:absolute;left:679px;top:628px;width:13px;height:21px;box-sizing:border-box;border-left:1px solid #b8aa8c;background:linear-gradient(135deg,#ffffff 30%,#e4e2de 100%);"></div>
<div style="position:absolute;left:682px;top:637px;width:0;height:0;border-left:4px solid transparent;border-right:4px solid transparent;border-top:5px solid #000;"></div>
<div class="t r" style="right:425px;top:638.80px;font-size:15px;"><span>Dynamic Priority C<u>h</u>ange</span></div>
<div class="fld" style="left:874px;top:627px;width:358px;height:23px;background:#fff;"></div>
<div style="position:absolute;left:1207px;top:628px;width:24px;height:21px;background:#fff"></div>
<div style="position:absolute;left:1207px;top:629px;width:23px;height:19px;box-sizing:border-box;border:1px solid #b8aa8c;background:linear-gradient(135deg,#ffffff 40%,#dedcd6 100%);"></div>
<svg style="position:absolute;left:1213px;top:632px" width="12" height="12" viewBox="0 0 12 12"><path d="M1.5 2.5 Q1.5 1 6 1 Q10.5 1 10.5 2.5 L10.5 9 Q10.5 11 6 11 Q1.5 11 1.5 9 Z" fill="#55585a"/><rect x="2.5" y="1.6" width="7" height="1.4" rx="0.7" fill="#a9ae88"/><circle cx="8.3" cy="8.3" r="0.6" fill="#ccc"/></svg>
<div class="t r" style="right:88px;top:637.80px;font-size:15px;"><span></span></div>
<div style="position:absolute;left:162px;top:659px;width:1071px;height:24px;box-sizing:border-box;border-top:1px solid #d2ddf2;border-bottom:1px solid #c8d6f0;background:#f8f8f7;"></div>
<div style="position:absolute;left:162px;top:685px;width:1071px;height:1px;background:#d2ddf2;"></div>
<div style="position:absolute;left:166px;top:667px;width:9px;height:9px;box-sizing:border-box;border:1px solid #666;"></div>
<div style="position:absolute;left:168px;top:671px;width:5px;height:1px;background:#333;"></div>
<div class="t" style="left:179px;top:670.80px;font-size:15px;font-family:'Liberation Sans', sans-serif;color:#000;"><span>Simulation</span></div>
<div class="t r" style="right:964px;top:711.80px;font-size:15px;"><span>Duration</span></div>
<div class="fld" style="left:335px;top:700px;width:359px;height:23px;background:#c8ddf2;"></div>
<div style="position:absolute;left:669px;top:701px;width:24px;height:21px;background:#fff"></div>
<div style="position:absolute;left:669px;top:702px;width:23px;height:19px;box-sizing:border-box;border:1px solid #b8aa8c;background:linear-gradient(135deg,#ffffff 40%,#dedcd6 100%);"></div>
<svg style="position:absolute;left:675px;top:705px" width="12" height="12" viewBox="0 0 12 12"><path d="M1.5 2.5 Q1.5 1 6 1 Q10.5 1 10.5 2.5 L10.5 9 Q10.5 11 6 11 Q1.5 11 1.5 9 Z" fill="#55585a"/><rect x="2.5" y="1.6" width="7" height="1.4" rx="0.7" fill="#a9ae88"/><circle cx="8.3" cy="8.3" r="0.6" fill="#ccc"/></svg>
<div class="t r" style="right:626px;top:710.80px;font-size:15px;"><span>0</span></div>
<div class="t r" style="right:425px;top:711.80px;font-size:15px;"><span>Cost</span></div>
<div class="fld" style="left:874px;top:700px;width:358px;height:23px;background:#c8ddf2;"></div>
<div style="position:absolute;left:1207px;top:701px;width:24px;height:21px;background:#fff"></div>
<div style="position:absolute;left:1207px;top:702px;width:23px;height:19px;box-sizing:border-box;border:1px solid #b8aa8c;background:linear-gradient(135deg,#ffffff 40%,#dedcd6 100%);"></div>
<svg style="position:absolute;left:1213px;top:705px" width="12" height="12" viewBox="0 0 12 12"><path d="M1.5 2.5 Q1.5 1 6 1 Q10.5 1 10.5 2.5 L10.5 9 Q10.5 11 6 11 Q1.5 11 1.5 9 Z" fill="#55585a"/><rect x="2.5" y="1.6" width="7" height="1.4" rx="0.7" fill="#a9ae88"/><circle cx="8.3" cy="8.3" r="0.6" fill="#ccc"/></svg>
<div class="t r" style="right:88px;top:710.80px;font-size:15px;"><span>0.00</span></div>
<div class="t r" style="right:964px;top:741.80px;font-size:15px;"><span>Workin<u>g</u> Time</span></div>
<div class="fld" style="left:335px;top:730px;width:359px;height:23px;background:#fff;"></div>
<div style="position:absolute;left:669px;top:731px;width:24px;height:21px;background:#fff"></div>
<div style="position:absolute;left:669px;top:732px;width:23px;height:19px;box-sizing:border-box;border:1px solid #b8aa8c;background:linear-gradient(135deg,#ffffff 40%,#dedcd6 100%);"></div>
<svg style="position:absolute;left:675px;top:735px" width="12" height="12" viewBox="0 0 12 12"><path d="M1.5 2.5 Q1.5 1 6 1 Q10.5 1 10.5 2.5 L10.5 9 Q10.5 11 6 11 Q1.5 11 1.5 9 Z" fill="#55585a"/><rect x="2.5" y="1.6" width="7" height="1.4" rx="0.7" fill="#a9ae88"/><circle cx="8.3" cy="8.3" r="0.6" fill="#ccc"/></svg>
<div class="t r" style="right:626px;top:740.80px;font-size:15px;"><span>0</span></div>
<div class="t r" style="right:425px;top:741.80px;font-size:15px;"><span>Waiting Time</span></div>
<div class="fld" style="left:874px;top:730px;width:358px;height:23px;background:#c8ddf2;"></div>
<div style="position:absolute;left:1207px;top:731px;width:24px;height:21px;background:#fff"></div>
<div style="position:absolute;left:1207px;top:732px;width:23px;height:19px;box-sizing:border-box;border:1px solid #b8aa8c;background:linear-gradient(135deg,#ffffff 40%,#dedcd6 100%);"></div>
<svg style="position:absolute;left:1213px;top:735px" width="12" height="12" viewBox="0 0 12 12"><path d="M1.5 2.5 Q1.5 1 6 1 Q10.5 1 10.5 2.5 L10.5 9 Q10.5 11 6 11 Q1.5 11 1.5 9 Z" fill="#55585a"/><rect x="2.5" y="1.6" width="7" height="1.4" rx="0.7" fill="#a9ae88"/><circle cx="8.3" cy="8.3" r="0.6" fill="#ccc"/></svg>
<div class="t r" style="right:88px;top:740.80px;font-size:15px;"><span>0</span></div>
<div style="position:absolute;left:162px;top:760px;width:1071px;height:1px;background:#d8e0f2;"></div>
<div style="position:absolute;left:1247px;top:836px;width:1px;height:1px;background:#777;"></div>
<div style="position:absolute;left:1250px;top:836px;width:1px;height:1px;background:#777;"></div>
<div style="position:absolute;left:1252px;top:833px;width:1px;height:1px;background:#777;"></div>
<div style="position:absolute;left:1252px;top:836px;width:1px;height:1px;background:#777;"></div>
<div style="position:absolute;left:1252px;top:436px;width:1px;height:1px;background:#555;"></div>
<div style="position:absolute;left:1252px;top:439px;width:1px;height:1px;background:#555;"></div>
<div style="position:absolute;left:1252px;top:442px;width:1px;height:1px;background:#555;"></div>
<div style="position:absolute;left:42px;top:814px;width:1168px;height:20px;box-sizing:border-box;border:1px solid #a9a8a0;border-right-color:#c8c6c0;border-bottom-color:#a9a8a0;"></div>
<div class="t" style="left:48px;top:823.80px;font-size:15px;font-family:'Liberation Sans', sans-serif;color:#000;"><span>Navigate or Update record</span></div>
<div style="position:absolute;left:1213px;top:814px;width:38px;height:20px;box-sizing:border-box;border:1px solid #a9a8a0;"></div>
<div class="t r" style="right:49px;top:823.80px;font-size:15px;font-family:'Liberation Sans', sans-serif;color:#1a1aff;"><span>1/1</span></div>
<div style="position:absolute;left:42px;top:834px;width:1210px;height:1px;background:#fff;"></div>
</body></html>
